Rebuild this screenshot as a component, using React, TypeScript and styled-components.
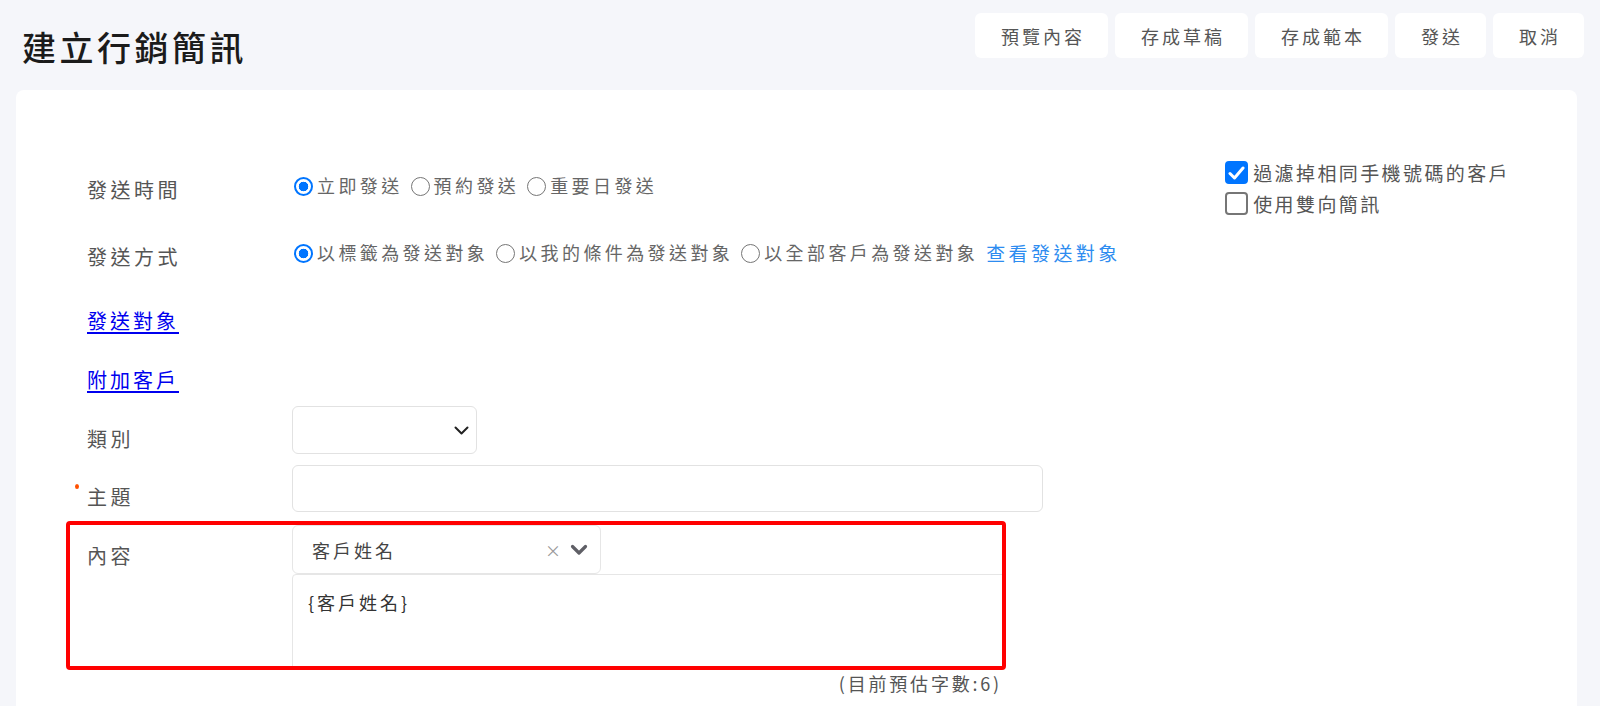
import React from "react";
import styled, { createGlobalStyle } from "styled-components";

const GlobalStyle = createGlobalStyle`
  html, body { margin: 0; padding: 0; height: 100%; overflow: hidden; }
  body {
    background: #f5f6fa;
    font-family: "Noto Sans CJK TC", "Noto Sans", sans-serif;
  }
  * { box-sizing: border-box; }
`;

const Page = styled.div`
  height: 706px;
  display: flex;
  flex-direction: column;
`;

const Header = styled.header`
  height: 90px;
  flex: none;
  display: flex;
  justify-content: space-between;
  align-items: flex-start;
  padding: 13px 16px 0 22px;
`;

const Title = styled.h1`
  margin: 12px 0 0;
  font-size: 34px;
  line-height: 44px;
  font-weight: 500;
  letter-spacing: 3.5px;
  color: #1b1b1b;
`;

const Actions = styled.div`
  display: flex;
  gap: 7px;
`;

const ActionButton = styled.button`
  height: 45px;
  padding: 0 23px 0 26px;
  background: #fff;
  border: none;
  border-radius: 6px;
  font-family: inherit;
  font-size: 18px;
  letter-spacing: 3px;
  color: #555;
  cursor: pointer;
`;

const Card = styled.main`
  flex: 1;
  margin: 0 23px 0 16px;
  background: #fff;
  border-radius: 8px 8px 0 0;
  padding: 71px 67px 0 71px;
`;

const Top = styled.div`
  display: grid;
  grid-template-columns: 1fr auto;
  align-items: start;
`;

const LeftRows = styled.div`
  margin-top: 9px;
`;

const Row = styled.div<{ $h: number }>`
  display: grid;
  grid-template-columns: 205px 1fr;
  align-items: start;
  height: ${(p) => p.$h}px;
`;

const FieldLabel = styled.div<{ $offset: number; $required?: boolean }>`
  position: relative;
  padding-top: ${(p) => p.$offset}px;
  font-size: 20px;
  line-height: 30px;
  letter-spacing: 3.5px;
  color: #555;
  white-space: nowrap;
  ${(p) =>
    p.$required
      ? `&::before {
          content: "";
          position: absolute;
          left: -12px;
          top: ${p.$offset + 2}px;
          width: 4px;
          height: 5px;
          border-radius: 50%;
          background: #ff5000;
        }`
      : ""}
`;

const RadioLine = styled.div`
  display: flex;
  align-items: center;
  height: 30px;
  padding-left: 2px;
  font-size: 18px;
  letter-spacing: 3.4px;
  color: #666;
  white-space: nowrap;
`;

const RadioOption = styled.label`
  display: inline-flex;
  align-items: center;
  margin-right: 8px;
  cursor: pointer;
`;

const RadioInput = styled.input.attrs({ type: "radio" })`
  appearance: none;
  width: 19px;
  height: 19px;
  margin: 3px 4px 0 0;
  border: 1.5px solid #767676;
  border-radius: 50%;
  background: #fff;
  flex: none;
  &:checked {
    border: 2px solid #0075ff;
    background: radial-gradient(circle, #0075ff 0 4.5px, #fff 5.1px);
  }
`;

const InfoLink = styled.a`
  color: #2d8cf0;
  text-decoration: none;
  font-size: 19px;
  letter-spacing: 3.4px;
  cursor: pointer;
`;

const NavLink = styled.a`
  display: inline-block;
  font-size: 20px;
  line-height: 30px;
  letter-spacing: 3px;
  color: #0000ee;
  text-decoration: underline;
  text-decoration-thickness: 2px;
  text-underline-offset: 3px;
  cursor: pointer;
`;

const Options = styled.div`
  display: flex;
  flex-direction: column;
  gap: 8px;
`;

const OptionItem = styled.label`
  display: flex;
  align-items: center;
  gap: 5px;
  height: 23px;
  font-size: 19px;
  line-height: 23px;
  letter-spacing: 2.4px;
  color: #555;
  white-space: nowrap;
  cursor: pointer;
`;

const CheckBox = styled.span<{ $checked?: boolean }>`
  width: 23px;
  height: 23px;
  flex: none;
  border-radius: 4px;
  display: flex;
  align-items: center;
  justify-content: center;
  background: ${(p) => (p.$checked ? "#0075ff" : "#fff")};
  border: 2px solid ${(p) => (p.$checked ? "#0075ff" : "#767676")};
`;

const SelectBox = styled.div`
  width: 185px;
  height: 48px;
  border: 1px solid #e2e2e2;
  border-radius: 6px;
  display: flex;
  align-items: center;
  justify-content: flex-end;
  padding-right: 7px;
`;

const TextInput = styled.input`
  width: 751px;
  height: 47px;
  border: 1px solid #e2e2e2;
  border-radius: 6px;
  outline: none;
  font-family: inherit;
  font-size: 18px;
  padding: 0 14px;
`;

const ContentBox = styled.div`
  margin-left: -21px;
  width: 940px;
  height: 149px;
  border: 4px solid #ff0000;
  border-radius: 4px;
  overflow: hidden;
  padding-left: 17px;
  display: grid;
  grid-template-columns: 205px 1fr;
  align-items: start;
`;

const ContentField = styled.div`
  display: flex;
  flex-direction: column;
`;

const TagSelect = styled.div`
  width: 309px;
  height: 49px;
  border: 1px solid #e6e6e6;
  border-radius: 6px;
  display: flex;
  align-items: center;
  padding: 0 12px 0 19px;
  font-size: 18px;
  letter-spacing: 3px;
  color: #444;
`;

const TagValue = styled.span`
  flex: 1;
`;

const ClearMark = styled.span`
  font-size: 16px;
  color: #999;
  margin-right: 9px;
  letter-spacing: 0;
`;

const MessageArea = styled.textarea`
  width: 720px;
  height: 110px;
  margin: 0;
  border: 1px solid #e6e6e6;
  border-radius: 4px 0 0 0;
  padding: 14px 15px;
  resize: none;
  outline: none;
  font-family: inherit;
  font-size: 18px;
  line-height: 26px;
  letter-spacing: 3px;
  color: #333;
`;

const Counter = styled.div`
  margin-left: -21px;
  width: 940px;
  padding-right: 4px;
  text-align: right;
  font-size: 18px;
  line-height: 26px;
  letter-spacing: 2.8px;
  color: #555;
`;

const Chevron = ({ thick }: { thick?: boolean }) =>
  thick ? (
    <svg width="18" height="12" viewBox="0 0 18 12">
      <polyline points="2.5,2.5 9,9 15.5,2.5" fill="none" stroke="#5f5f66" strokeWidth="3.2" strokeLinecap="round" strokeLinejoin="round" />
    </svg>
  ) : (
    <svg width="15" height="9" viewBox="0 0 15 9">
      <polyline points="1.5,1.5 7.5,7.5 13.5,1.5" fill="none" stroke="#222" strokeWidth="2" strokeLinecap="round" strokeLinejoin="round" />
    </svg>
  );

const CheckMark = () => (
  <svg width="17" height="14" viewBox="0 0 17 14">
    <polyline points="2,7.5 6.5,12 15,2" fill="none" stroke="#fff" strokeWidth="3" strokeLinecap="round" strokeLinejoin="round" />
  </svg>
);

export default function App() {
  return (
    <Page>
      <GlobalStyle />
      <Header>
        <Title>建立行銷簡訊</Title>
        <Actions>
          <ActionButton>預覽內容</ActionButton>
          <ActionButton>存成草稿</ActionButton>
          <ActionButton>存成範本</ActionButton>
          <ActionButton>發送</ActionButton>
          <ActionButton>取消</ActionButton>
        </Actions>
      </Header>
      <Card>
        <Top>
          <LeftRows>
            <Row $h={67}>
              <FieldLabel $offset={5}>發送時間</FieldLabel>
              <RadioLine>
                <RadioOption>
                  <RadioInput name="time" defaultChecked />
                  立即發送
                </RadioOption>
                <RadioOption>
                  <RadioInput name="time" />
                  預約發送
                </RadioOption>
                <RadioOption>
                  <RadioInput name="time" />
                  重要日發送
                </RadioOption>
              </RadioLine>
            </Row>
            <Row $h={69}>
              <FieldLabel $offset={5}>發送方式</FieldLabel>
              <RadioLine>
                <RadioOption>
                  <RadioInput name="mode" defaultChecked />
                  以標籤為發送對象
                </RadioOption>
                <RadioOption>
                  <RadioInput name="mode" />
                  以我的條件為發送對象
                </RadioOption>
                <RadioOption>
                  <RadioInput name="mode" />
                  以全部客戶為發送對象
                </RadioOption>
                <InfoLink>查看發送對象</InfoLink>
              </RadioLine>
            </Row>
          </LeftRows>
          <Options>
            <OptionItem>
              <CheckBox $checked>
                <CheckMark />
              </CheckBox>
              過濾掉相同手機號碼的客戶
            </OptionItem>
            <OptionItem>
              <CheckBox />
              使用雙向簡訊
            </OptionItem>
          </Options>
        </Top>
        <Row $h={59}>
          <NavLink>發送對象</NavLink>
        </Row>
        <Row $h={41}>
          <NavLink>附加客戶</NavLink>
        </Row>
        <Row $h={59}>
          <FieldLabel $offset={18}>類別</FieldLabel>
          <SelectBox>
            <Chevron />
          </SelectBox>
        </Row>
        <Row $h={56}>
          <FieldLabel $offset={17} $required>
            主題
          </FieldLabel>
          <TextInput />
        </Row>
        <ContentBox>
          <FieldLabel $offset={16}>內容</FieldLabel>
          <ContentField>
            <TagSelect>
              <TagValue>客戶姓名</TagValue>
              <ClearMark>×</ClearMark>
              <Chevron thick />
            </TagSelect>
            <MessageArea defaultValue="{客戶姓名}" />
          </ContentField>
        </ContentBox>
        <Counter>(目前預估字數:6)</Counter>
      </Card>
    </Page>
  );
}
